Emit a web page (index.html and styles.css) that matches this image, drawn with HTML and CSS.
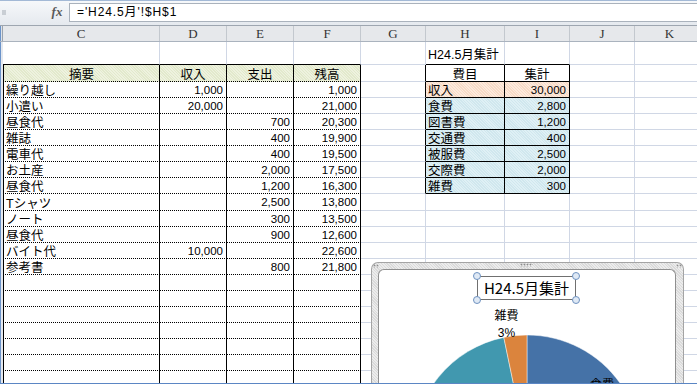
FILE: index.html
```html
<!DOCTYPE html>
<html lang="ja">

<head>
  <meta charset="UTF-8">
  <meta name="viewport" content="width=device-width, initial-scale=1.0">
  <title>H24.5月 集計</title>
  <link rel="stylesheet" href="styles.css">
</head>

<body>
  <div class="window">
    <!-- formula bar -->
    <div class="formula-bar">
      <div class="name-box"><span class="arrow"></span></div>
      <div class="fx">fx</div>
      <div class="formula">='H24.5月'!$H$1</div>
    </div>

    <!-- column letters -->
    <div class="col-heads">
      <div class="stub"></div>
      <div class="ch">C</div>
      <div class="ch">D</div>
      <div class="ch">E</div>
      <div class="ch">F</div>
      <div class="ch">G</div>
      <div class="ch">H</div>
      <div class="ch">I</div>
      <div class="ch">J</div>
      <div class="ch">K</div>
    </div>

    <div class="sheet">
      <div class="grid" id="grid"></div>

      <!-- pie chart object floating over the cells -->
      <div class="chart">
        <span class="grip grip-l"></span>
        <span class="grip grip-m"></span>
        <span class="grip grip-r"></span>
        <div class="plot">
          <svg class="pie" width="297" height="200" viewBox="0 0 297 200">
            <g stroke="#ffffff" stroke-opacity="0.45" stroke-width="1">
              <path d="M148 179 L148 65 A114 114 0 0 1 255.4 217.2 Z" fill="#4572a7" />
              <path d="M148 179 L255.4 217.2 A114 114 0 0 1 193.4 283.6 Z" fill="#aa4643" />
              <path d="M148 179 L193.4 283.6 A114 114 0 0 1 163.5 291.9 Z" fill="#89a54e" />
              <path d="M148 179 L163.5 291.9 A114 114 0 0 1 34 179 Z" fill="#71588f" />
              <path d="M148 179 L34 179 A114 114 0 0 1 124.8 67.4 Z" fill="#4198af" />
              <path d="M148 179 L124.8 67.4 A114 114 0 0 1 148 65 Z" fill="#db843d" />
            </g>
          </svg>
          <div class="chart-title">
            H24.5月集計
            <i class="hd hd-tl"></i><i class="hd hd-tr"></i>
            <i class="hd hd-bl"></i><i class="hd hd-br"></i>
          </div>
          <div class="label lbl-misc">雑費<br>3%</div>
          <div class="label lbl-food">食費</div>
        </div>
      </div>
    </div>
  </div>

  <script>
    // ledger in columns C-F, summary in H-I
    const ledger = [
      ["摘要", "収入", "支出", "残高"],
      ["繰り越し", "1,000", "", "1,000"],
      ["小遣い", "20,000", "", "21,000"],
      ["昼食代", "", "700", "20,300"],
      ["雑誌", "", "400", "19,900"],
      ["電車代", "", "400", "19,500"],
      ["お土産", "", "2,000", "17,500"],
      ["昼食代", "", "1,200", "16,300"],
      ["Tシャツ", "", "2,500", "13,800"],
      ["ノート", "", "300", "13,500"],
      ["昼食代", "", "900", "12,600"],
      ["バイト代", "10,000", "", "22,600"],
      ["参考書", "", "800", "21,800"]
    ];

    const summary = [
      ["費目", "集計"],
      ["収入", "30,000"],
      ["食費", "2,800"],
      ["図書費", "1,200"],
      ["交通費", "400"],
      ["被服費", "2,500"],
      ["交際費", "2,000"],
      ["雑費", "300"]
    ];

    const grid = document.getElementById("grid");

    for (let r = 1; r <= 21; r++) {
      const stub = document.createElement("div");
      stub.className = "stub";
      grid.appendChild(stub);

      for (let c = 0; c < 9; c++) {
        const cell = document.createElement("div");
        const cls = ["cell"];
        let text = "";

        if (c <= 3) {
          if (r === 1) {
            cls.push("lt-top");
          } else {
            cls.push("lt");
            if (c === 0) cls.push("lt-first");
            if (r === 2) cls.push("lt-head");
            const row = ledger[r - 2];
            if (row) text = row[c];
            if (c > 0 && r > 2) cls.push("num");
          }
        }

        if (c === 4 && r >= 2 && r <= 9) cls.push("rt-left");

        if (c === 5 || c === 6) {
          if (r === 1) {
            cls.push("rt-top");
            if (c === 5) text = "H24.5月集計";
          } else if (r <= 9) {
            cls.push("rt");
            text = summary[r - 2][c - 5];
            if (r === 2) cls.push("rt-head");
            else if (r === 3) cls.push("rt-in");
            else cls.push("rt-out");
            if (c === 6 && r > 2) cls.push("num");
          }
        }

        cell.className = cls.join(" ");
        cell.textContent = text;
        grid.appendChild(cell);
      }
    }
  </script>
</body>

</html>
```

FILE: styles.css
```css
* {
  box-sizing: border-box;
}

body {
  margin: 0;
  background: #fff;
  font-family: "Liberation Sans", "Noto Sans CJK JP", sans-serif;
  color: #000;
}

.window {
  width: 697px;
  height: 384px;
  overflow: hidden;
}

/* formula bar */

.formula-bar {
  height: 26px;
  display: flex;
  align-items: flex-start;
  background: linear-gradient(#f6f8fa, #e5e9ee);
  border-top: 1px solid #a3b9d6;
  border-bottom: 1px solid #9ea6b0;
}

.name-box {
  width: 40px;
  height: 100%;
  position: relative;
}

.name-box .arrow {
  position: absolute;
  left: 2px;
  top: 9px;
  width: 4px;
  height: 5px;
  background: #c9ced4;
}

.fx {
  width: 29px;
  padding: 3px 0 0 5px;
  text-align: center;
  font-family: "Liberation Serif", serif;
  font-style: italic;
  font-weight: bold;
  font-size: 13px;
  color: #5a5a5a;
}

.formula {
  flex: 1;
  height: 19px;
  margin-top: 2px;
  padding-left: 7px;
  background: #fff;
  border: 1px solid #aab2bc;
  border-right: none;
  font-size: 12px;
  line-height: 17px;
  letter-spacing: 0.9px;
}

/* column letters */

.col-heads,
.grid {
  display: grid;
  grid-template-columns: 3px 157px 67px 67px 67px 65px 79px 65px 65px 70px;
}

.col-heads {
  height: 16px;
  background: #e6e8eb;
  border-bottom: 1px solid #aab3be;
}

.col-heads .stub {
  background: linear-gradient(to right, #6b93c9 0 1px, #dfe3e8 1px 2px, #9aa3ad 2px);
}

.ch {
  border-right: 1px solid #c3c8ce;
  text-align: center;
  font-family: "Liberation Serif", serif;
  font-size: 13px;
  line-height: 15px;
  color: #333;
}

/* cells */

.sheet {
  position: relative;
  height: 342px;
  overflow: hidden;
  border-bottom: 1px solid #5b86c4;
}

.grid {
  grid-template-rows: 23px 17px repeat(7, 16px) 17px repeat(12, 16px);
}

.grid .stub {
  background: linear-gradient(to right, #6b93c9 0 1px, #e4e8ee 1px);
}

.cell {
  display: flex;
  align-items: center;
  padding: 0 2px;
  border-right: 1px solid #d0d7e5;
  border-bottom: 1px solid #d0d7e5;
  font-size: 12.5px;
  white-space: nowrap;
  overflow: hidden;
}

.num {
  justify-content: flex-end;
  font-size: 11.5px;
  padding-right: 3px;
}

/* ledger table C-F */

.lt-top {
  border-bottom-color: #000;
}

.lt {
  border-right-color: #000;
  border-bottom: 1px dotted #000;
}

.lt-first {
  border-left: 1px solid #000;
}

.lt-head {
  justify-content: center;
  background: repeating-linear-gradient(45deg, #eef2df 0 1px, #e2e9cc 1px 2px);
}

/* summary table H-I */

.rt-top {
  border-bottom-color: #000;
}

.rt-left {
  border-right-color: #000;
}

.rt {
  border-right-color: #000;
  border-bottom-color: #000;
}

.rt-head {
  justify-content: center;
}

.rt-in {
  background: repeating-linear-gradient(45deg, #fdeadd 0 1px, #f7dbc7 1px 2px);
}

.rt-out {
  background: repeating-linear-gradient(45deg, #dff0f5 0 1px, #d0e7ee 1px 2px);
}

/* chart */

.chart {
  position: absolute;
  left: 371px;
  top: 220px;
  width: 313px;
  height: 130px;
  padding: 6px 7px 0 6px;
  border: 1px solid #a4a4a4;
  border-bottom: none;
  border-radius: 7px 7px 0 0;
  background: repeating-linear-gradient(45deg, #ececec 0 1px, #dadada 1px 2px);
}

.grip {
  position: absolute;
  top: 0;
  height: 4px;
  background: radial-gradient(circle, #8c8c8c 0.8px, transparent 1.1px) 0 0 / 3px 3px;
}

.grip-l {
  left: 1px;
  top: 1px;
  width: 6px;
}

.grip-m {
  left: 148px;
  width: 13px;
}

.grip-r {
  right: 1px;
  top: 1px;
  width: 6px;
}

.plot {
  position: relative;
  height: 100%;
  background: #fff;
  border: 1px solid #8f8f8f;
  border-bottom: none;
  border-radius: 6px 6px 0 0;
  overflow: hidden;
}

.pie {
  position: absolute;
  left: 0;
  top: 0;
}

.chart-title {
  position: absolute;
  left: 98px;
  top: 6px;
  width: 99px;
  height: 24px;
  border: 1px solid #707070;
  font-family: "Noto Sans CJK JP", sans-serif;
  font-size: 15px;
  line-height: 22px;
  text-align: center;
  white-space: nowrap;
  background: #fff;
}

.hd {
  position: absolute;
  width: 8px;
  height: 8px;
  border-radius: 50%;
  border: 1px solid #6f92c0;
  background: #dfe9f5;
}

.hd-tl { left: -5px; top: -5px; }
.hd-tr { right: -5px; top: -5px; }
.hd-bl { left: -5px; bottom: -5px; }
.hd-br { right: -5px; bottom: -5px; }

.label {
  position: absolute;
  font-size: 12px;
  line-height: 17px;
  text-align: center;
}

.lbl-misc {
  left: 111px;
  top: 38px;
  width: 33px;
}

.lbl-food {
  left: 211px;
  top: 107px;
}
```
